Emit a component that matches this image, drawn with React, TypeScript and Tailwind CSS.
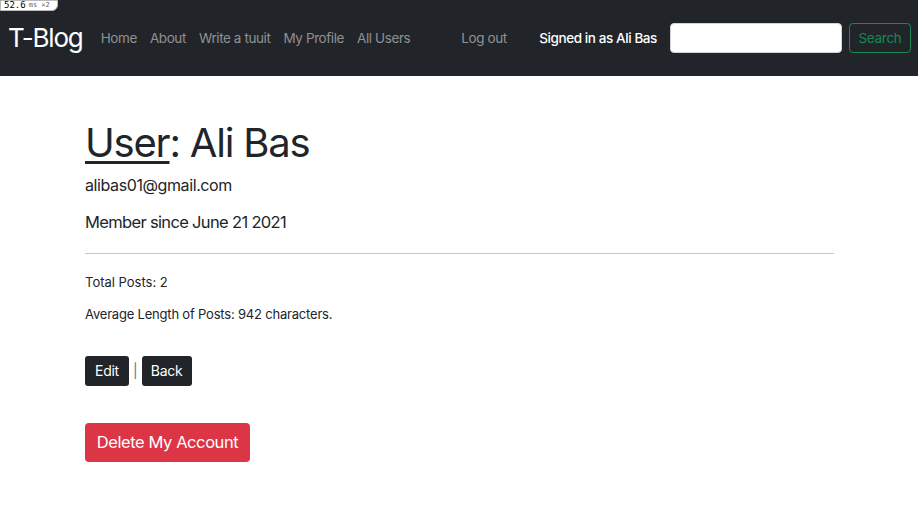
import React from "react";

// Navigation links on the left side of the navbar
const navLinks = ["Home", "About", "Write a tuuit", "My Profile", "All Users"];

const Navbar: React.FC = () => {
  return (
    <nav className="flex h-[76px] items-center whitespace-nowrap bg-[#212529] pl-[8px] pr-[7px]">
      <a className="shrink-0 text-[26px] leading-none tracking-[-0.045em] text-white">T-Blog</a>
      <ul className="ml-[18px] flex shrink-0 items-center gap-[13px] text-[13.5px] tracking-[-0.03em] text-[#8f9194]">
        {navLinks.map((link) => (
          <li key={link}>{link}</li>
        ))}
      </ul>
      <span className="ml-[51px] shrink-0 text-[13.5px] tracking-[-0.03em] text-[#8f9194]">Log out</span>
      <div className="ml-auto flex shrink-0 items-center">
        <span className="text-[13.5px] font-medium tracking-[-0.03em] text-white">Signed in as Ali Bas</span>
        <input
          type="text"
          className="ml-[13px] h-[30px] w-[172px] rounded-[4px] border border-[#ced4da] bg-white"
        />
        <button className="ml-[7px] h-[30px] w-[62px] rounded-[4px] border border-[#198754] text-[13.5px] tracking-[-0.02em] text-[#198754]">
          Search
        </button>
      </div>
    </nav>
  );
};

const App: React.FC = () => {
  return (
    <div className="relative min-h-[508px] bg-white font-['Inter','Noto_Sans',sans-serif] text-[#212529]">
      {/* debug overlay from the original capture */}
      <div className="absolute left-0 top-0 flex h-[11px] w-[58px] items-center rounded-br-[6px] border border-[#bbb] bg-white px-[3px] font-['DejaVu_Sans_Mono',monospace] text-[9px] leading-none text-black">
        52.6 <span className="ml-[3px] text-[7px] text-[#666]">ms ×2</span>
      </div>
      <Navbar />
      <main className="pl-[85px] pr-[84px] pt-[43px]">
        <h1 className="text-[40px] leading-[1.2] tracking-[-0.03em]">
          <span className="underline decoration-[3px] underline-offset-[4px]">User</span>: Ali Bas
        </h1>
        <p className="mt-[6px] text-[16px] tracking-[-0.025em]">alibas01@gmail.com</p>
        <p className="mt-[13px] text-[16.5px] tracking-[-0.04em]">Member since June 21 2021</p>
        <hr className="mt-[18px] border-t border-[#c8c8c8]" />
        <p className="mt-[19px] text-[13px]">Total Posts: 2</p>
        <p className="mt-[13px] text-[13px] tracking-[-0.015em]">Average Length of Posts: 942 characters.</p>
        <div className="mt-[31px] flex items-center">
          <button className="h-[30px] w-[44px] rounded-[3px] bg-[#212529] text-[14px] tracking-[-0.02em] text-white">Edit</button>
          <span className="mx-[4px] text-[14px] text-[#6c757d]">|</span>
          <button className="h-[30px] w-[50px] rounded-[3px] bg-[#212529] text-[14px] tracking-[-0.02em] text-white">Back</button>
        </div>
        <button className="mt-[37px] h-[39px] w-[165px] rounded-[4px] bg-[#dc3545] text-[16.5px] tracking-[-0.025em] text-white">
          Delete My Account
        </button>
      </main>
    </div>
  );
};

export default App;
